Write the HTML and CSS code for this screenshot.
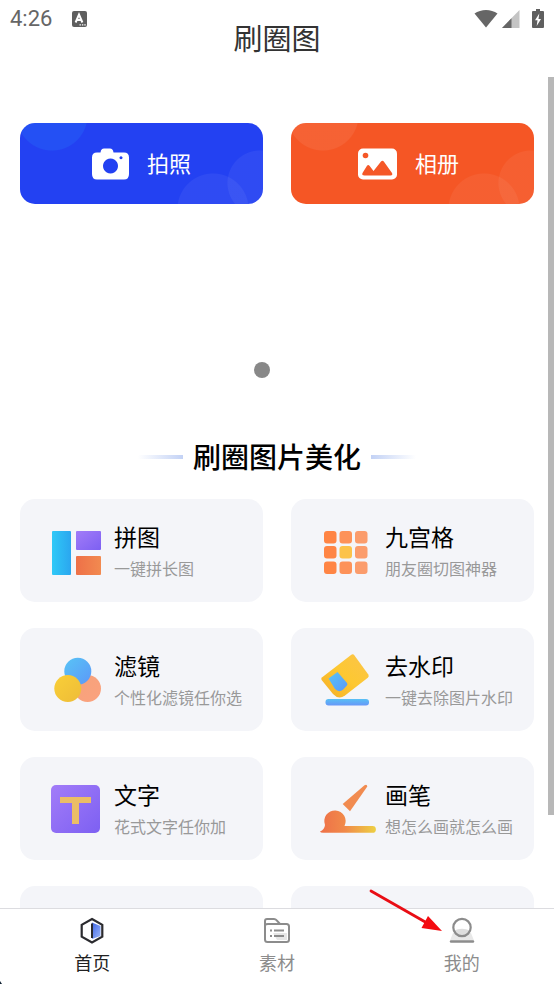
FILE: index.html
```html
<!DOCTYPE html>
<html lang="zh-CN">
<head>
<meta charset="utf-8">
<meta name="viewport" content="width=device-width, initial-scale=1">
<title>刷圈图</title>
<link rel="stylesheet" href="styles.css">
</head>
<body>
<header class="top">
  <div class="status status-left">
    <span class="time">4:26</span>
    <svg width="15" height="16" viewBox="0 0 15 16"><rect width="15" height="16" rx="2" fill="#5f5f5f"/><path d="M3.6 11.5 7 3.5l3.400 8M5 9h4" fill="none" stroke="#fff" stroke-width="2"/><path d="M7.500 13.800h1.400M9.900 13.800h1.400M12.300 13.800h1.400" stroke="#fff" stroke-width="1.300"/></svg>
  </div>
  <h1 class="title">刷圈图</h1>
  <div class="status status-right">
    <svg width="24" height="20" viewBox="0 0 24 20"><path d="M.5 4.500C7-.2 17-.2 23.500 4.500L12 18.500z" fill="#666"/></svg>
    <svg width="18" height="20" viewBox="0 0 18 20"><path d="M17.500 1v18H0z" fill="#c4c4c4"/><path d="M9.500 9.300V19H0z" fill="#666"/></svg>
    <svg width="12" height="20" viewBox="0 0 12 20"><path d="M4 0h4v2h3q1 0 1 1v15q0 1-1 1H1q-1 0-1-1V3q0-1 1-1h3z" fill="#5f5f5f"/><path d="M7.300 4.500 3 11.300h2.500L4.700 17 9 10H6.500z" fill="#fff"/></svg>
  </div>
</header>

<main class="content">
  <div class="actions">
    <button class="action camera" type="button">
      <svg width="37" height="32" viewBox="0 0 37 32"><path fill="#fff" fill-rule="evenodd" d="M5 4.500h3.500C9 1.500 10 .5 12 .5h6c2 0 3 1 3.500 4H32q5 0 5 5V26q0 5.500-5 5.500H5Q0 31.500 0 26V9.500q0-5 5-5zM18.500 10.500a7.500 7.500 0 1 0 .01 0zM29 8.300a1.500 1.500 0 1 0 .01 0z"/></svg>
      <span>拍照</span>
    </button>
    <button class="action album" type="button">
      <svg width="39" height="32" viewBox="0 0 39 32"><rect y=".5" width="39" height="31" rx="5" fill="#fff"/><circle cx="7.500" cy="7.500" r="2.800" fill="#f55727"/><path d="M4.500 25 9 17.800q1.200-1.800 2.500 0L15.500 23 23 13.500q1.500-1.500 2.800 0L34 25q1 2.500-1.500 2.500h-26Q3.500 27.500 4.500 25z" fill="#f55727"/></svg>
      <span>相册</span>
    </button>
  </div>

  <div class="banner"><i class="dot active"></i><i class="dot"></i></div>

  <h2 class="heading">刷圈图片美化</h2>

  <div class="cards">
    <a class="card" href="#">
      <svg class="icon" viewBox="0 0 60 60">
        <defs>
          <linearGradient id="cyan"><stop stop-color="#2fc9f7"/><stop offset="1" stop-color="#2ba6ef"/></linearGradient>
          <linearGradient id="violet" x2="1" y2="1"><stop stop-color="#a27cf8"/><stop offset="1" stop-color="#7d60f2"/></linearGradient>
          <linearGradient id="coral"><stop stop-color="#ee7048"/><stop offset="1" stop-color="#f28a50"/></linearGradient>
          <linearGradient id="sky" x2="1" y2="1"><stop stop-color="#58c4f6"/><stop offset="1" stop-color="#5c98f8"/></linearGradient>
          <linearGradient id="gold" x2="1" y2="1"><stop stop-color="#f9cf38"/><stop offset="1" stop-color="#eebc38"/></linearGradient>
          <linearGradient id="peach" x2="1" y2="1"><stop stop-color="#f5a27b"/><stop offset="1" stop-color="#fba27e"/></linearGradient>
          <linearGradient id="eraser" x1="1" x2="0" y2="1"><stop stop-color="#fbc44a"/><stop offset=".5" stop-color="#fdc832"/><stop offset="1" stop-color="#f5ad26"/></linearGradient>
          <linearGradient id="bar" x2="0" y2="1"><stop stop-color="#58c0f5"/><stop offset="1" stop-color="#6897f8"/></linearGradient>
          <linearGradient id="paint" gradientUnits="userSpaceOnUse" x1="1" x2="57"><stop stop-color="#ee7048"/><stop offset=".45" stop-color="#f18a4a"/><stop offset="1" stop-color="#edd044"/></linearGradient>
        </defs>
        <rect x="4" y="11" width="19" height="44" rx="1" fill="url(#cyan)"/><rect x="28" y="11" width="25" height="19" rx="1" fill="url(#violet)"/><rect x="28" y="36" width="25" height="19" rx="1" fill="url(#coral)"/>
      </svg>
      <span class="text"><b>拼图</b><small>一键拼长图</small></span>
    </a>
    <a class="card" href="#">
      <svg class="icon" viewBox="0 0 60 60">
        <g fill="#ff8545"><rect x="5" y="11" width="12.500" height="12.500" rx="3"/><rect x="5" y="26" width="12.500" height="12.500" rx="3"/><rect x="5" y="41.500" width="12.500" height="12.500" rx="3"/></g>
        <g fill="#fd9259"><rect x="20.500" y="11" width="12.500" height="12.500" rx="3"/><rect x="20.500" y="41.500" width="12.500" height="12.500" rx="3"/></g>
        <g fill="#fb9c6c"><rect x="36" y="11" width="12.500" height="12.500" rx="3"/><rect x="36" y="26" width="12.500" height="12.500" rx="3"/><rect x="36" y="41.500" width="12.500" height="12.500" rx="3"/></g>
        <rect x="20.500" y="26" width="12.500" height="12.500" rx="3" fill="#fcc34a"/>
      </svg>
      <span class="text"><b>九宫格</b><small>朋友圈切图神器</small></span>
    </a>
    <a class="card" href="#">
      <svg class="icon" viewBox="0 0 60 60"><circle cx="39.500" cy="39.500" r="13.500" fill="url(#peach)"/><circle cx="29.800" cy="22.300" r="13.500" fill="url(#sky)"/><circle cx="19.800" cy="39.500" r="13.500" fill="url(#gold)"/></svg>
      <span class="text"><b>滤镜</b><small>个性化滤镜任你选</small></span>
    </a>
    <a class="card" href="#">
      <svg class="icon" viewBox="0 0 60 60"><path d="M32 6q2-1.500 3.500.5L49.300 25.500q1.200 1.800-.5 3.200L26 46.500q-6.500 4.500-12-1.500L2.600 31q-1-1.500.6-2.800z" fill="url(#eraser)"/><path d="M9.500 29.500 18.500 23 28 34q1 1.500-.3 2.800l-3.500 3.700q-4.200 3.500-8.200-.5-2.500-4-6.500-10.500z" fill="url(#sky)"/><rect x="6.500" y="50" width="43.500" height="6.500" rx="3" fill="url(#bar)"/></svg>
      <span class="text"><b>去水印</b><small>一键去除图片水印</small></span>
    </a>
    <a class="card" href="#">
      <svg class="icon" viewBox="0 0 60 60"><rect x="3" y="7" width="49" height="48" rx="5" fill="url(#violet)"/><path d="M12 19h31v6H31v21h-7V25H12z" fill="#ebbd66"/></svg>
      <span class="text"><b>文字</b><small>花式文字任你加</small></span>
    </a>
    <a class="card" href="#">
      <svg class="icon" viewBox="0 0 60 60"><path d="M45.500 7.300q2.500-1.500 2.800 1.200L31 33.300 23.700 26z" fill="#f18b50"/><path d="M1 53.500q4.500-1.800 5-6.500a10.700 10.700 0 1 1 19.500 1H53.500a3.400 3.400 0 0 1 0 6.800H4q-2.500 0-3-1.300z" fill="url(#paint)"/></svg>
      <span class="text"><b>画笔</b><small>想怎么画就怎么画</small></span>
    </a>
    <div class="card"></div>
    <div class="card"></div>
  </div>
</main>
<div class="scrollbar"></div>

<nav class="tabs">
  <a class="tab current" href="#">
    <svg width="28" height="28" viewBox="0 0 28 28"><defs><linearGradient id="home" x2="1" y2="1"><stop stop-color="#3e66e6"/><stop offset="1" stop-color="#9db7fa"/></linearGradient></defs><path d="M14 5.500 22.500 9v10L14 22z" fill="url(#home)"/><path d="M14 2 24.300 7.800v11.800L14 25.500 3.700 19.600V7.800z" fill="none" stroke="#2b2b2f" stroke-width="2.200"/><path d="M14 6.500v14.500" stroke="#2b2b2f" stroke-width="2"/></svg>
    <span>首页</span>
  </a>
  <a class="tab" href="#">
    <svg width="28" height="28" viewBox="0 0 28 28"><path d="M10 16h14v7H14z" fill="#e6e6e6"/><g fill="none" stroke="#8c8c8c" stroke-width="2"><path d="M2 8V4q0-2 2-2h7q1.500 0 2.500 1.200L17 7h6.500Q26 7 26 9.500v13q0 2.500-2.500 2.500h-19Q2 25 2 22.500zM2 8q1-1 3-1h12"/><path d="M7 13.500h2M11 13.500h10M7 19h2M11 19h10" stroke-width="1.800"/></g></svg>
    <span>素材</span>
  </a>
  <a class="tab" href="#">
    <svg width="28" height="28" viewBox="0 0 28 28"><path d="M5 16h18l3 7.500H2z" fill="#e8e8e8"/><circle cx="14" cy="10.500" r="8.700" fill="#fff"/><path d="M6 13.500q8-3.500 16 0-2.500 6-8 6t-8-6z" fill="#dedede"/><circle cx="14" cy="10.500" r="8.700" fill="none" stroke="#8c8c8c" stroke-width="2.200"/><path d="M3 24.500h22" stroke="#8c8c8c" stroke-width="2.400" stroke-linecap="round"/></svg>
    <span>我的</span>
    <svg class="arrow" width="74" height="46" viewBox="0 0 74 46"><path d="M2 2 58 34" stroke="#e90d14" stroke-width="2.800" stroke-linecap="round"/><path d="M59 27 73 42 52.500 39z" fill="#f40b10"/></svg>
  </a>
</nav>
</body>
</html>
```

FILE: styles.css
```css
* {
  box-sizing: border-box;
}

body {
  position: relative;
  display: flex;
  flex-direction: column;
  height: 100vh;
  margin: 0;
  overflow: hidden;
  background: #fff;
  color: #000;
  font-family: "Noto Sans CJK SC", sans-serif;
}

svg {
  display: block;
  flex: none;
}

a {
  color: inherit;
  text-decoration: none;
}

.top {
  display: grid;
  grid-template-columns: 1fr auto 1fr;
  flex: none;
  padding-bottom: 19px;
}

.status {
  display: flex;
  align-items: center;
  height: 37px;
}

.status-left {
  gap: 20px;
  padding-left: 10px;
}

.status-right {
  justify-content: flex-end;
  padding-right: 10px;
}

.status-right svg + svg {
  margin-left: 4px;
}

.status-right svg:last-child {
  margin-left: 12px;
}

.time {
  color: #666;
  font: 22px/26px Roboto, sans-serif;
}

.title {
  margin: 16px 0 0;
  color: #333;
  font-size: 29px;
  font-weight: 400;
  line-height: 42px;
}

.content {
  flex: 1;
  min-height: 0;
  padding: 46px 20px 0;
  overflow: hidden;
}

.actions,
.cards {
  display: grid;
  grid-template-columns: 1fr 1fr;
  gap: 26px 28px;
}

.action {
  display: flex;
  align-items: center;
  justify-content: center;
  gap: 18px;
  height: 81px;
  padding: 0;
  border: 0;
  border-radius: 15px;
  color: #fff;
  font: 22px/32px "Noto Sans CJK SC", sans-serif;
}

.action span {
  padding-bottom: 4px;
}

.camera {
  background:
    radial-gradient(circle at 32px -8px, #2450f4 35px, transparent 36px),
    radial-gradient(circle at calc(100% - 50px) 86px, #ffffff0e 35px, transparent 36px),
    radial-gradient(circle at calc(100% - 3px) 60px, #ffffff0e 32px, transparent 33px),
    #2341f2;
}

.album {
  padding-right: 8px;
  background:
    radial-gradient(circle at 32px -8px, #ffffff12 35px, transparent 36px),
    radial-gradient(circle at calc(100% - 50px) 86px, #ffffff0e 35px, transparent 36px),
    radial-gradient(circle at calc(100% - 3px) 60px, #ffffff0e 32px, transparent 33px),
    #f55625;
}

.banner {
  display: flex;
  align-items: flex-end;
  justify-content: center;
  gap: 15px;
  height: 174px;
}

.dot {
  width: 16px;
  height: 16px;
  border-radius: 50%;
  background: #fff;
}

.dot.active {
  background: #888;
}

.heading {
  display: flex;
  align-items: center;
  justify-content: center;
  gap: 10px;
  margin: 57px 0 22px;
  font-size: 28px;
  font-weight: 500;
  line-height: 42px;
}

.heading::before,
.heading::after {
  width: 45px;
  height: 4px;
  margin-top: 2px;
  background: linear-gradient(to right, #fff, #c3d2f5);
  content: "";
}

.heading::after {
  background: linear-gradient(to left, #fff, #c3d2f5);
}

.card {
  display: flex;
  align-items: center;
  gap: 6px;
  height: 103px;
  padding: 0 0 2px 28px;
  border-radius: 15px;
  background: #f4f5f9;
}

.icon {
  width: 60px;
  height: 60px;
}

.text {
  display: flex;
  flex-direction: column;
  gap: 4px;
  white-space: nowrap;
}

.text b {
  font-size: 23px;
  font-weight: 400;
  line-height: 32px;
}

.text small {
  color: #999;
  font-size: 16px;
  line-height: 24px;
}

.scrollbar {
  position: absolute;
  top: 77px;
  right: 0;
  width: 6px;
  height: 75%;
  background: #b8b8b8;
}

.tabs {
  display: grid;
  grid-template-columns: repeat(3, 1fr);
  flex: none;
  height: 76px;
  border-top: 1px solid #dcdce0;
  background: #fff;
}

.tab {
  position: relative;
  display: flex;
  flex-direction: column;
  align-items: center;
  gap: 4px;
  padding-top: 8px;
  color: #8c8c8c;
  font-size: 18px;
  line-height: 26px;
}

.tab.current {
  color: #222;
}

.arrow {
  position: absolute;
  right: calc(50% + 19px);
  top: -20px;
}

.tabs::after {
  position: absolute;
  bottom: 0;
  left: 0;
  width: 2px;
  height: 3px;
  background: #123;
  clip-path: polygon(0 0, 100% 100%, 0 100%);
  content: "";
}
```
